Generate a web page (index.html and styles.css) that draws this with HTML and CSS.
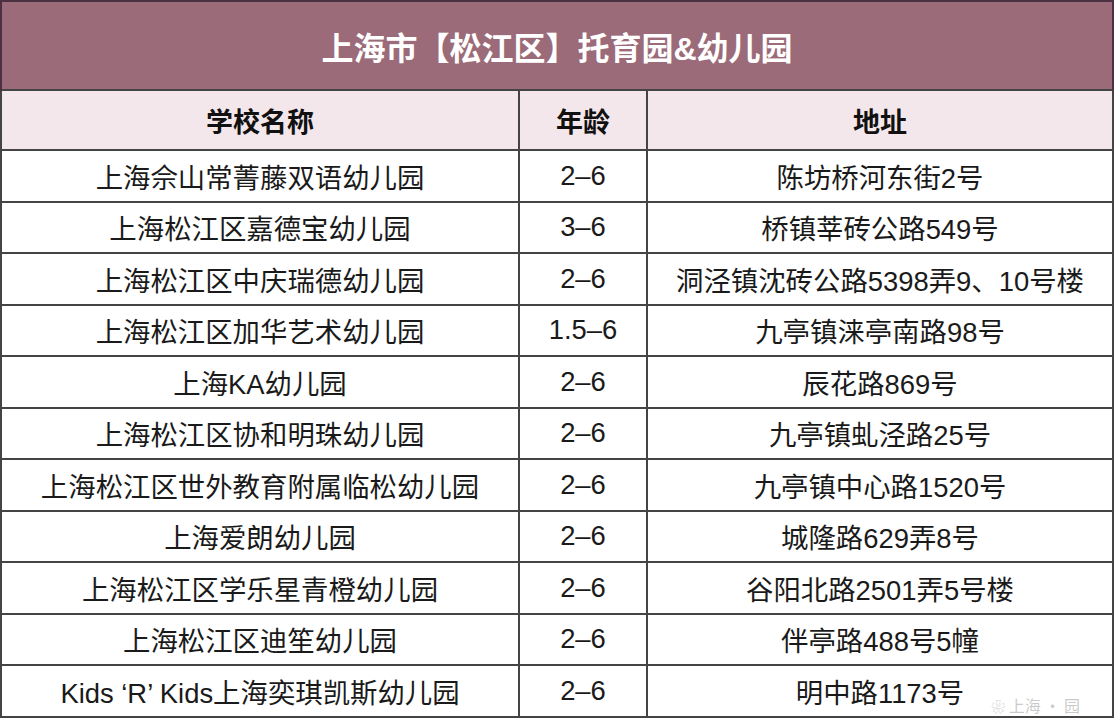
FILE: index.html
```html
<!DOCTYPE html>
<html lang="zh-CN">
<head>
<meta charset="utf-8">
<title>上海市【松江区】托育园&amp;幼儿园</title>
<link rel="stylesheet" href="styles.css">
</head>
<body>
<div class="sheet">
  <table class="schools">
    <colgroup>
      <col class="c-name">
      <col class="c-age">
      <col class="c-addr">
    </colgroup>
    <thead>
      <tr class="title-row"><th colspan="3">上海市【松江区】托育园&amp;幼儿园</th></tr>
      <tr class="head-row"><th>学校名称</th><th>年龄</th><th>地址</th></tr>
    </thead>
    <tbody>
      <tr><td>上海佘山常菁藤双语幼儿园</td><td>2–6</td><td>陈坊桥河东街2号</td></tr>
      <tr><td>上海松江区嘉德宝幼儿园</td><td>3–6</td><td>桥镇莘砖公路549号</td></tr>
      <tr><td>上海松江区中庆瑞德幼儿园</td><td>2–6</td><td>洞泾镇沈砖公路5398弄9、10号楼</td></tr>
      <tr><td>上海松江区加华艺术幼儿园</td><td>1.5–6</td><td>九亭镇涞亭南路98号</td></tr>
      <tr><td>上海KA幼儿园</td><td>2–6</td><td>辰花路869号</td></tr>
      <tr><td>上海松江区协和明珠幼儿园</td><td>2–6</td><td>九亭镇虬泾路25号</td></tr>
      <tr><td>上海松江区世外教育附属临松幼儿园</td><td>2–6</td><td>九亭镇中心路1520号</td></tr>
      <tr><td>上海爱朗幼儿园</td><td>2–6</td><td>城隆路629弄8号</td></tr>
      <tr><td>上海松江区学乐星青橙幼儿园</td><td>2–6</td><td>谷阳北路2501弄5号楼</td></tr>
      <tr><td>上海松江区迪笙幼儿园</td><td>2–6</td><td>伴亭路488号5幢</td></tr>
      <tr><td>Kids ‘R’ Kids上海奕琪凯斯幼儿园</td><td>2–6</td><td>明中路1173号</td></tr>
    </tbody>
  </table>
  <div class="watermark"><span class="wm-icon">❀</span> 上海 · 园</div>
</div>
</body>
</html>
```

FILE: styles.css
```css
html, body {
  margin: 0;
  padding: 0;
  background: #ffffff;
}

.sheet {
  position: relative;
  width: 1114px;
  height: 718px;
  overflow: hidden;
}

.schools {
  width: 1114px;
  border-collapse: collapse;
  table-layout: fixed;
  font-family: "Liberation Sans", "Noto Sans CJK SC", sans-serif;
  color: #1a1a1a;
  border: 2px solid #3a3a3a;
}

.c-name { width: 518px; }
.c-age { width: 128px; }
.c-addr { width: auto; }

.schools th,
.schools td {
  text-align: center;
  padding: 0;
  border: 2px solid #444444;
  white-space: nowrap;
}

.title-row th {
  height: 87px;
  background: #9b6b79;
  color: #ffffff;
  font-size: 32px;
  font-weight: 700;
  border-color: #4a3040;
  border-bottom: 1px solid #6b4856;
}

.head-row th {
  height: 58px;
  background: #f4e7eb;
  font-size: 27px;
  font-weight: 700;
  color: #111111;
}

.schools td {
  height: 49.5px;
  font-size: 27.4px;
  font-weight: 400;
}

.watermark {
  position: absolute;
  right: 34px;
  bottom: 4px;
  font-family: "Noto Sans CJK SC", sans-serif;
  font-size: 16px;
  line-height: 16px;
  color: rgba(150, 150, 150, 0.5);
}

.wm-icon {
  font-size: 14px;
}
```
